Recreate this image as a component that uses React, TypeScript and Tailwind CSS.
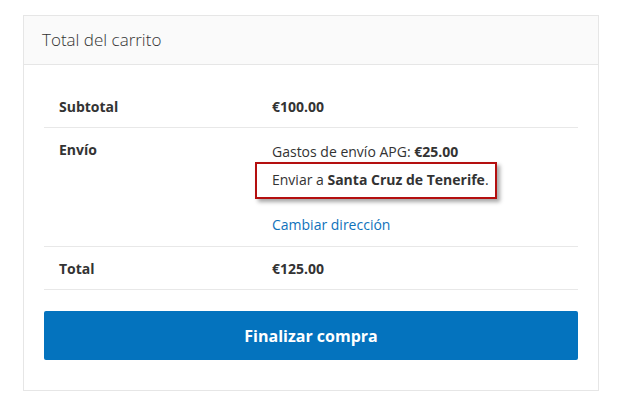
export default function App() {
  return (
    <div className="min-h-screen bg-white pt-[15px] pl-[23px] text-[14px] text-[#333]" style={{ fontFamily: '"Open Sans", "Noto Sans", sans-serif' }}>
      <div className="w-[576px] border border-[#e6e6e6]">
        <div className="h-[49px] border-b border-[#e6e6e6] bg-[#fafafa] pl-[18px] flex items-center">
          <h2 className="text-[17px] font-light text-[#333]">Total del carrito</h2>
        </div>
        <div className="px-[20px] pt-[20px] pb-[30px]">
          <div className="grid grid-cols-[213px_1fr]">
            <div className="h-[43px] border-b border-[#e8e8e8] pl-[15px] flex items-center font-bold">Subtotal</div>
            <div className="h-[43px] border-b border-[#e8e8e8] pl-[15px] flex items-center font-bold">€100.00</div>

            <div className="h-[119px] border-b border-[#e8e8e8] pl-[15px] pt-[11px] font-bold">Envío</div>
            <div className="relative h-[119px] border-b border-[#e8e8e8] pl-[15px] pt-[12px]">
              <p className="leading-[24px]">
                Gastos de envío APG: <span className="font-bold">€25.00</span>
              </p>
              <p className="mt-[4px] leading-[24px]">
                Enviar a <span className="font-bold">Santa Cruz de Tenerife</span>.
              </p>
              <a href="#" className="mt-[21px] block leading-[24px] text-[#0f72bb]">Cambiar dirección</a>
              <div className="absolute left-[-2px] top-[34px] h-[37px] w-[242px] border-2 border-[#b40f0f] shadow-[3px_3px_4px_rgba(0,0,0,0.35)]"></div>
            </div>

            <div className="h-[43px] border-b border-[#e8e8e8] pl-[15px] flex items-center font-bold">Total</div>
            <div className="h-[43px] border-b border-[#e8e8e8] pl-[15px] flex items-center font-bold">€125.00</div>
          </div>
          <button className="mt-[21px] h-[49px] w-full rounded-[2px] bg-[#0473be] text-[16px] font-bold text-white">
            Finalizar compra
          </button>
        </div>
      </div>
    </div>
  );
}
